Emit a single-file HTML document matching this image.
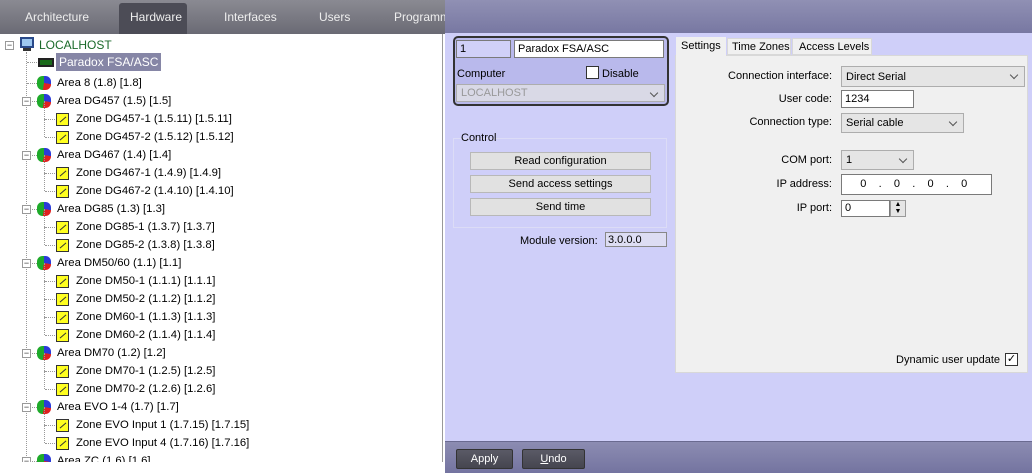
<!DOCTYPE html>
<html><head><style>
*{box-sizing:border-box;margin:0;padding:0}
body{width:1032px;height:473px;overflow:hidden;position:relative;background:#fff;font-family:"Liberation Sans",sans-serif;font-size:11px;color:#000}
.abs{position:absolute}
#topbar{left:0;top:0;width:445px;height:34px;background:linear-gradient(#8a8a92,#6a6a74);}
.tab{position:absolute;top:10px;color:#eee;font-size:12px}
#hw{left:119px;top:3px;width:68px;height:31px;background:#4c4c56;border-radius:3px 3px 0 0}
#tree{left:0;top:34px;width:443px;height:428px;background:#fff;border-right:1px solid #999;overflow:hidden}
.row{position:absolute;height:18px;line-height:18px;white-space:nowrap;font-size:11.3px}
.area{position:absolute;width:14px;height:14px;border-radius:40%;background:conic-gradient(#2a3bd8 0 100deg,#e02020 100deg 190deg,#1eaa2a 190deg 360deg)}
.zone{position:absolute;width:13px;height:13px;background:#ffff20;border:1px solid #333}
.zone:after{content:"";position:absolute;left:2px;top:5px;width:8px;height:1px;background:#333;transform:rotate(-40deg)}
.pm{position:absolute;width:9px;height:9px;border:1px solid #999;background:#fff;font-size:9px;line-height:7px;text-align:center;color:#333}
.vl{position:absolute;border-left:1px dotted #999}
.hl{position:absolute;border-top:1px dotted #999}
#right{left:445px;top:0;width:587px;height:473px;background:#cfcff9}
#rtop{left:445px;top:0;width:587px;height:33px;background:linear-gradient(#9090b4,#7878a2)}
#rbot{left:445px;top:441px;width:587px;height:32px;background:linear-gradient(#8c8cb2,#7474a0);border-top:1px solid #6a6a90}
.btn{position:absolute;background:#e1e1e1;border:1px solid #b8b8b8;text-align:center;line-height:17px;font-size:11px}
.dbtn{position:absolute;background:linear-gradient(#5a5a66,#45454f);border:1px solid #333;border-radius:2px;color:#fff;text-align:center;line-height:18px;font-size:11px}
.inp{position:absolute;background:#fff;border:1px solid #7a7a7a;padding-left:3px;line-height:16px;font-size:11px}
.cmb{position:absolute;background:#e5e5e5;border:1px solid #adadad;padding-left:4px;font-size:11px}
.cmb:after{content:"";position:absolute;right:7px;top:5px;width:5px;height:5px;border-right:1px solid #555;border-bottom:1px solid #555;transform:rotate(45deg)}
.lbl{position:absolute;right:200px;text-align:right;font-size:11px;white-space:nowrap}
</style></head><body>
<div id="topbar" class="abs"></div>
<div id="hw" class="abs"></div>
<div class="tab" style="left:25px">Architecture</div>
<div class="tab" style="left:130px">Hardware</div>
<div class="tab" style="left:224px">Interfaces</div>
<div class="tab" style="left:319px">Users</div>
<div class="tab" style="left:394px">Programmi</div>
<div id="tree" class="abs">
<div class="pm" style="left:5px;top:7px">−</div>
<div class="abs" style="left:20px;top:3px;width:14px;height:11px;border:2px solid #2a4a8a;background:#9ec8f0"></div>
<div class="abs" style="left:23px;top:14px;width:8px;height:3px;background:#333"></div>
<div class="row" style="left:39px;top:2px;color:#1a6a2a;font-size:12px">LOCALHOST</div>
<div class="vl" style="left:26px;top:18px;height:408px"></div>
<div class="hl" style="left:27px;top:28px;width:10px"></div>
<div class="abs" style="left:38px;top:24px;width:16px;height:9px;background:#1a6a1a;border:2px solid #222"></div>
<div class="row" style="left:56px;top:19px;background:#8686a6;color:#fff;padding:0 3px;font-size:12px">Paradox FSA/ASC</div>
</div>
<div id="right" class="abs"></div>
<div id="rtop" class="abs"></div>
<div class="abs" style="left:453px;top:36px;width:216px;height:70px;border:2px solid #333;border-radius:5px;background:#b9b9ec"></div>
<div class="inp" style="left:456px;top:40px;width:55px;height:18px;background:#d0d0f8">1</div>
<div class="inp" style="left:514px;top:40px;width:150px;height:18px">Paradox FSA/ASC</div>
<div class="abs" style="left:457px;top:68px">Computer</div>
<div class="abs" style="left:586px;top:66px;width:13px;height:13px;border:1px solid #333;background:#fff"></div>
<div class="abs" style="left:602px;top:68px">Disable</div>
<div class="cmb" style="left:456px;top:84px;width:209px;height:18px;background:#d9d9e6;color:#999;line-height:17px">LOCALHOST</div>
<div class="abs" style="left:453px;top:138px;width:214px;height:90px;border:1px solid #dcdcf6"></div>
<div class="abs" style="left:461px;top:132px">Control</div>
<div class="btn" style="left:470px;top:152px;width:181px;height:18px">Read configuration</div>
<div class="btn" style="left:470px;top:175px;width:181px;height:18px">Send access settings</div>
<div class="btn" style="left:470px;top:198px;width:181px;height:18px">Send time</div>
<div class="abs" style="left:520px;top:235px">Module version:</div>
<div class="abs" style="left:605px;top:232px;width:62px;height:15px;border:1px solid #888;background:#ddddf3;padding-left:2px;line-height:14px">3.0.0.0</div>
<div class="abs" style="left:675px;top:55px;width:353px;height:318px;background:#f0f0f0;border:1px solid #d8d8d8"></div>
<div class="abs" style="left:676px;top:37px;width:50px;height:19px;background:#f0f0f0;padding:3px 0 0 5px;font-size:11px">Settings</div>
<div class="abs" style="left:727px;top:38px;width:64px;height:17px;background:#f0f0f0;border:1px solid #d8d8d8;padding:2px 0 0 4px;font-size:11px">Time Zones</div>
<div class="abs" style="left:792px;top:38px;width:80px;height:17px;background:#f0f0f0;border:1px solid #d8d8d8;padding:2px 0 0 6px;font-size:11px">Access Levels</div>
<div class="lbl" style="top:70px">Connection interface:</div>
<div class="cmb" style="left:841px;top:66px;width:184px;height:21px;line-height:20px">Direct Serial</div>
<div class="lbl" style="top:93px">User code:</div>
<div class="inp" style="left:841px;top:90px;width:73px;height:18px">1234</div>
<div class="lbl" style="top:116px">Connection type:</div>
<div class="cmb" style="left:841px;top:113px;width:123px;height:20px;line-height:19px">Serial cable</div>
<div class="lbl" style="top:154px">COM port:</div>
<div class="cmb" style="left:841px;top:150px;width:73px;height:20px;line-height:19px">1</div>
<div class="lbl" style="top:178px">IP address:</div>
<div class="inp" style="left:841px;top:174px;width:151px;height:21px;line-height:19px">&nbsp;&nbsp;&nbsp;&nbsp;&nbsp;0&nbsp;&nbsp;&nbsp;&nbsp;.&nbsp;&nbsp;&nbsp;&nbsp;0&nbsp;&nbsp;&nbsp;&nbsp;.&nbsp;&nbsp;&nbsp;&nbsp;0&nbsp;&nbsp;&nbsp;&nbsp;.&nbsp;&nbsp;&nbsp;&nbsp;0</div>
<div class="lbl" style="top:202px">IP port:</div>
<div class="inp" style="left:841px;top:200px;width:49px;height:17px;line-height:15px">0</div>
<div class="abs" style="left:890px;top:200px;width:16px;height:17px;border:1px solid #999;background:#e5e5e5;font-size:7px;line-height:7px;text-align:center">▲<br>▼</div>
<div class="abs" style="right:32px;top:354px;white-space:nowrap">Dynamic user update</div>
<div class="abs" style="left:1005px;top:353px;width:13px;height:13px;border:1px solid #333;background:#fff;font-size:11px;line-height:11px;text-align:center">✓</div>
<div id="rbot" class="abs"></div>
<div class="dbtn" style="left:456px;top:449px;width:57px;height:20px">Apply</div>
<div class="dbtn" style="left:522px;top:449px;width:63px;height:20px"><u>U</u>ndo</div>
<script>
var items=[["a","Area 8 (1.8) [1.8]",0],["a","Area DG457 (1.5) [1.5]",1],["z","Zone DG457-1 (1.5.11) [1.5.11]"],["z","Zone DG457-2 (1.5.12) [1.5.12]"],["a","Area DG467 (1.4) [1.4]",1],["z","Zone DG467-1 (1.4.9) [1.4.9]"],["z","Zone DG467-2 (1.4.10) [1.4.10]"],["a","Area DG85 (1.3) [1.3]",1],["z","Zone DG85-1 (1.3.7) [1.3.7]"],["z","Zone DG85-2 (1.3.8) [1.3.8]"],["a","Area DM50/60 (1.1) [1.1]",1],["z","Zone DM50-1 (1.1.1) [1.1.1]"],["z","Zone DM50-2 (1.1.2) [1.1.2]"],["z","Zone DM60-1 (1.1.3) [1.1.3]"],["z","Zone DM60-2 (1.1.4) [1.1.4]"],["a","Area DM70 (1.2) [1.2]",1],["z","Zone DM70-1 (1.2.5) [1.2.5]"],["z","Zone DM70-2 (1.2.6) [1.2.6]"],["a","Area EVO 1-4 (1.7) [1.7]",1],["z","Zone EVO Input 1 (1.7.15) [1.7.15]"],["z","Zone EVO Input 4 (1.7.16) [1.7.16]"],["a","Area ZC (1.6) [1.6]",1]];
var t=document.getElementById("tree"),h="";
items.forEach(function(it,i){var y=40+i*18;var cy=y+9;
if(it[0]=="a"){h+='<div class="hl" style="left:27px;top:'+cy+'px;width:10px"></div>';if(it[2])h+='<div class="pm" style="left:22px;top:'+(cy-4)+'px">−</div>';h+='<div class="area" style="left:37px;top:'+(cy-7)+'px"></div><div class="row" style="left:57px;top:'+y+'px">'+it[1]+'</div>';}
else{h+='<div class="vl" style="left:44px;top:'+(y-9)+'px;height:18px"></div><div class="hl" style="left:45px;top:'+cy+'px;width:10px"></div><div class="zone" style="left:56px;top:'+(cy-6)+'px"></div><div class="row" style="left:76px;top:'+y+'px">'+it[1]+'</div>';}});
t.insertAdjacentHTML("beforeend",h);
</script>
</body></html>
